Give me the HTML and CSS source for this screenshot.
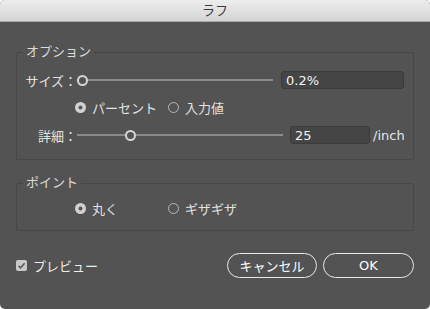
FILE: index.html
```html
<!DOCTYPE html>
<html lang="ja">
<head>
  <meta charset="UTF-8">
  <title>ラフ</title>
  <link rel="stylesheet" href="styles.css">
</head>
<body>

  <div class="dialog">
    <div class="titlebar">ラフ</div>

    <div class="content">
      <!-- オプション -->
      <fieldset class="group group-options">
        <legend>オプション</legend>

        <div class="row">
          <span class="label">サイズ：</span>
          <div class="slider">
            <span class="track" style="width: 0px"></span>
            <span class="knob"></span>
            <span class="track track-rest"></span>
          </div>
          <div class="field field-size">0.2%</div>
        </div>

        <div class="row row-radios">
          <span class="radio-item"><span class="radio checked"></span>パーセント</span>
          <span class="radio-item"><span class="radio"></span>入力値</span>
        </div>

        <div class="row">
          <span class="label">詳細：</span>
          <div class="slider">
            <span class="track" style="width: 48px"></span>
            <span class="knob"></span>
            <span class="track track-rest"></span>
          </div>
          <div class="field field-detail">25</div>
          <span class="unit">/inch</span>
        </div>
      </fieldset>

      <!-- ポイント -->
      <fieldset class="group group-points">
        <legend>ポイント</legend>
        <div class="row row-radios">
          <span class="radio-item"><span class="radio checked"></span>丸く</span>
          <span class="radio-item"><span class="radio"></span>ギザギザ</span>
        </div>
      </fieldset>

      <!-- プレビュー / buttons -->
      <div class="footer">
        <label class="preview"><span class="checkbox">
          <svg width="9" height="9" viewBox="0 0 9 9"><path d="M1.5 4.8 L3.6 6.8 L7.6 2.2" fill="none" stroke="#5a5a5a" stroke-width="1.6"/></svg>
        </span>プレビュー</label>
        <button class="btn btn-cancel">キャンセル</button>
        <button class="btn btn-ok">OK</button>
      </div>
    </div>
  </div>

</body>
</html>
```

FILE: styles.css
```css
body {
  margin: 0;
  background-color: #ffffff;
  font-family: "DejaVu Sans", "Noto Sans CJK JP", sans-serif;
  font-size: 13px;
  color: #e2e2e2;
}

.dialog {
  width: 430px;
  height: 309px;
  background-color: #535353;
  border-radius: 5px;
  overflow: hidden;
}

.titlebar {
  height: 21px;
  line-height: 21px;
  text-align: center;
  color: #3a3a3a;
  background: linear-gradient(#ededed, #d5d5d5);
  border-bottom: 1px solid #a9a9a9;
}

.content {
  padding: 0 16px;
}

/* group boxes */
.group {
  margin: 22px 0 0 0;
  padding: 11px 0 15px 0;
  border: 1px solid #474747;
  border-radius: 2px;
  min-width: 0;
}

.group legend {
  margin-left: 6px;
  padding: 0 3px;
  line-height: 16px;
  color: #dcdcdc;
}

.group-points {
  margin-top: 15px;
  padding: 8px 0 13px 0;
}

.row {
  display: flex;
  align-items: center;
  height: 18px;
  padding: 0 9px 0 8px;
}

.row + .row {
  margin-top: 9px;
}

.group-options .row-radios {
  height: 19px;
}

.label {
  width: 52px;
  text-align: right;
  white-space: nowrap;
}

/* slider */
.slider {
  flex: 1;
  display: flex;
  align-items: center;
}

.track {
  height: 2px;
  background-color: #8b8b8b;
}

.track-rest {
  flex: 1;
}

.knob {
  width: 11px;
  height: 11px;
  box-sizing: border-box;
  border: 2px solid #d6d6d6;
  border-radius: 50%;
}

.field {
  height: 18px;
  line-height: 18px;
  box-sizing: border-box;
  padding-left: 4px;
  background-color: #454545;
  border: 1px solid #3b3b3b;
  border-radius: 3px;
  color: #f4f4f4;
}

.field-size {
  width: 123px;
  margin-left: 8px;
}

.field-detail {
  width: 80px;
  margin-left: 7px;
}

.unit {
  width: 31px;
  margin-left: 3px;
  color: #e6e6e6;
}

/* radios */
.row-radios {
  padding-left: 58px;
}

.radio-item {
  display: flex;
  align-items: center;
  width: 93px;
  white-space: nowrap;
}

.radio {
  width: 11px;
  height: 11px;
  margin-right: 6px;
  box-sizing: border-box;
  border: 1px solid #b8b8b8;
  border-radius: 50%;
}

.radio.checked {
  border: none;
  background-color: #555555;
  box-shadow: inset 0 0 0 3.5px #d0d0d0;
}

/* footer */
.footer {
  display: flex;
  align-items: center;
  margin-top: 22px;
}

.preview {
  display: flex;
  align-items: center;
  color: #ececec;
}

.checkbox {
  display: flex;
  align-items: center;
  justify-content: center;
  width: 11px;
  height: 11px;
  margin-right: 6px;
  background-color: #c9c9c9;
  border-radius: 2px;
}

.btn {
  height: 25px;
  padding: 0;
  font-family: "DejaVu Sans", "Noto Sans CJK JP", sans-serif;
  font-size: 13px;
  color: #ffffff;
  background: transparent;
  border: 1.5px solid #e8e8e8;
  border-radius: 13px;
}

.btn-cancel {
  width: 90px;
  margin-left: auto;
}

.btn-ok {
  width: 91px;
  margin-left: 6px;
}
```
